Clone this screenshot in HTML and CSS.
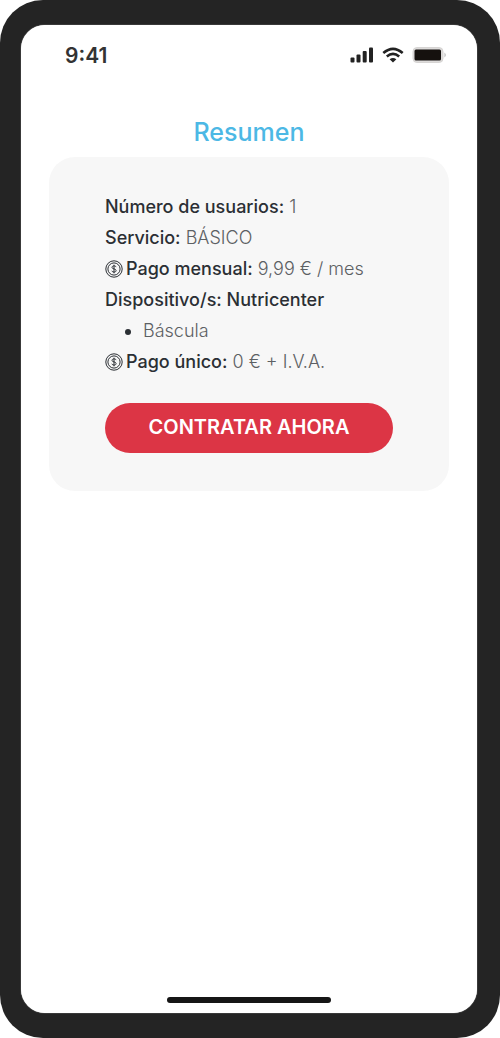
FILE: index.html
```html
<!DOCTYPE html>
<html lang="es">
<head>
<meta charset="utf-8">
<meta name="viewport" content="width=device-width, initial-scale=1">
<title>Resumen</title>
<link rel="stylesheet" href="styles.css">
</head>
<body>
<svg class="sprite" aria-hidden="true">
  <symbol id="coin" viewBox="0 0 18 18">
    <circle cx="9" cy="9" r="8.2"/>
    <circle cx="9" cy="9" r="6.1"/>
    <path d="M11.1 7.1C10.8 6.2 10 5.9 9 5.9 7.800 5.900 7 6.500 7 7.400 7 9.500 11.100 8.300 11.100 10.600 11.100 11.500 10.200 12.100 9 12.100 7.900 12.100 7.100 11.700 6.800 10.800M9 4.700V13.300"/>
  </symbol>
</svg>
<div class="phone">
  <div class="screen">
    <header class="status">
      <span class="time">9:41</span>
      <div class="indicators">
        <svg width="24" height="16" viewBox="0 0 24 16" fill="currentColor" aria-hidden="true">
          <rect x="0.500" y="10.500" width="4" height="5" rx="1"/>
          <rect x="6.500" y="7.500" width="4" height="8" rx="1"/>
          <rect x="12.700" y="4" width="4" height="11.500" rx="1"/>
          <rect x="19" y="0.500" width="4" height="15" rx="1"/>
        </svg>
        <svg width="22" height="16" viewBox="0 0 22 16" fill="none" stroke="currentColor" stroke-width="2.600" aria-hidden="true">
          <path d="M1.300 6Q11-2.300 20.700 6M4.800 9.500Q11 4.300 17.200 9.500"/>
          <path d="M7.600 12.200Q11 9.800 14.400 12.200L11 15.600Z" fill="currentColor" stroke="none"/>
        </svg>
        <svg width="35" height="16" viewBox="0 0 35 16" aria-hidden="true">
          <rect x="1" y="0.500" width="30" height="15" rx="4" fill="#dddbda" stroke="#d6d4d3"/>
          <rect x="2.500" y="2.500" width="26.500" height="11" rx="1.500" fill="#15110e"/>
          <path d="M32.500 5.500Q35 8 32.500 10.500Z" fill="#b5b5b5"/>
        </svg>
      </div>
    </header>
    <main class="content">
      <h1 class="title">Resumen</h1>
      <section class="card">
        <p class="row"><strong>Número de usuarios:</strong> 1</p>
        <p class="row"><strong>Servicio:</strong> BÁSICO</p>
        <p class="row"><svg class="coin" aria-hidden="true"><use href="#coin"/></svg><strong>Pago mensual:</strong> 9,99 € / mes</p>
        <p class="row"><strong>Dispositivo/s: Nutricenter</strong></p>
        <ul class="devices"><li>Báscula</li></ul>
        <p class="row"><svg class="coin" aria-hidden="true"><use href="#coin"/></svg><strong>Pago único:</strong> 0 € + I.V.A.</p>
        <button class="cta" type="button">CONTRATAR AHORA</button>
      </section>
    </main>
    <div class="home"></div>
  </div>
</div>
</body>
</html>
```
FILE: styles.css
```css
* { box-sizing: border-box; }
body {
  margin: 0;
  background: #fff;
  color: #5c6063;
  font-family: Inter, "Liberation Sans", sans-serif;
}
.sprite { position: absolute; width: 0; height: 0; }
.phone {
  display: flex;
  min-height: 100vh;
  padding: 25px 23px 25px 21px;
  border-radius: 43px;
  background: #242424;
}
.screen {
  flex: 1;
  display: flex;
  flex-direction: column;
  border-radius: 24px;
  background: #fff;
  box-shadow: 0 0 1px #fff;
}
.status {
  display: flex;
  justify-content: space-between;
  align-items: center;
  height: 60px;
  padding: 0 30px 0 44px;
  color: #222;
}
.time { color: #333; font-size: 21px; font-weight: 600; }
.indicators { display: flex; gap: 8px; }
.content { flex: 1; padding: 32px 28px; }
.title {
  margin: 0 0 10px;
  color: #4cb8e5;
  font-size: 25px;
  font-weight: 500;
  line-height: 30px;
  text-align: center;
}
.card {
  padding: 34px 56px 38px;
  border-radius: 26px;
  background: #f7f7f7;
  font-size: 18px;
  font-weight: 300;
  line-height: 31px;
}
.row { margin: 0; white-space: nowrap; }
.row strong { color: #2b2f34; font-weight: 500; }
.coin {
  width: 18px;
  height: 18px;
  margin-right: 3px;
  vertical-align: -3px;
  fill: none;
  stroke: #2b2f34;
  stroke-width: 1;
}
.devices { margin: 0; padding-left: 38px; }
.devices li::marker { color: #2b2f34; }
.cta {
  display: block;
  width: 100%;
  height: 50px;
  margin-top: 26px;
  padding: 0 0 2px;
  border: 0;
  border-radius: 25px;
  background: #dc3545;
  color: #fff;
  font: 600 20px Inter, "Liberation Sans", sans-serif;
}
.home {
  align-self: center;
  width: 36%;
  height: 6px;
  margin-bottom: 10px;
  border-radius: 3px;
  background: #151515;
}
```
